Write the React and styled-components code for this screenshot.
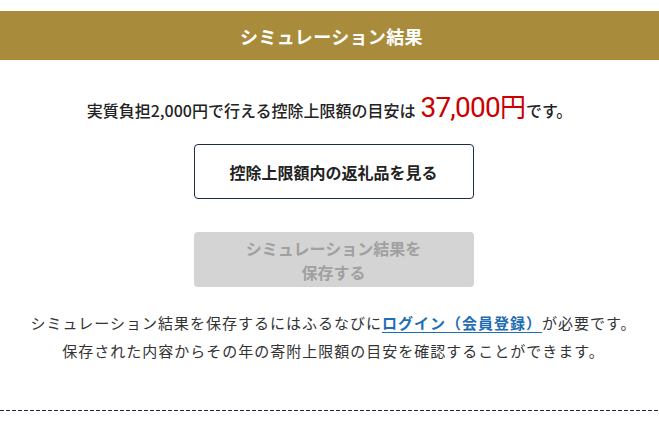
import React from "react";
import styled, { createGlobalStyle } from "styled-components";

const Global = createGlobalStyle`
  html, body { margin: 0; padding: 0; background: #fff; }
  body { font-family: "Noto Sans CJK JP", "Noto Sans", sans-serif; color: #222; }
`;

const Page = styled.div`
  padding-top: 11px;
  display: flex;
  flex-direction: column;
  align-items: stretch;
`;

const Header = styled.h2`
  margin: 0;
  height: 49px;
  background: #a98b3c;
  color: #fff;
  font-size: 18px;
  font-weight: 700;
  letter-spacing: 0.02em;
  display: flex;
  align-items: center;
  justify-content: center;
  padding-left: 4px;
`;

const Body = styled.div`
  display: flex;
  flex-direction: column;
  align-items: center;
  padding-top: 28px;
  padding-left: 8px;
`;

const Summary = styled.p`
  margin: 0 8px 0 0;
  font-size: 16px;
  font-weight: 500;
  color: #222;
  line-height: 36px;
  height: 36px;
  display: flex;
  align-items: baseline;
`;

const Amount = styled.span`
  font-family: "Roboto", sans-serif;
  font-size: 28px;
  font-weight: 400;
  color: #cc0000;
  margin: 0 0 0 5px;
  letter-spacing: -0.8px;
`;

const Yen = styled.span`
  font-family: "Noto Sans CJK JP", sans-serif;
  font-size: 26px;
  letter-spacing: 0;
`;

const ButtonStack = styled.div`
  display: flex;
  flex-direction: column;
  gap: 33px;
  margin-top: 20px;
`;

const Button = styled.button`
  width: 280px;
  height: 55px;
  box-sizing: border-box;
  border-radius: 4px;
  font-family: "Noto Sans CJK JP", sans-serif;
  font-size: 16px;
  font-weight: 700;
  line-height: 24px;
  padding: 0;
  display: flex;
  align-items: center;
  justify-content: center;
  text-align: center;
  border: ${(p) => (p.$disabled ? "none" : "1px solid #1e2a4a")};
  background: ${(p) => (p.$disabled ? "#d4d4d4" : "#fff")};
  color: ${(p) => (p.$disabled ? "#a0a0a0" : "#222")};
  cursor: ${(p) => (p.$disabled ? "default" : "pointer")};
`;

const Note = styled.p`
  margin: 22px 0 0;
  font-size: 15px;
  letter-spacing: 1px;
  line-height: 28px;
  color: #333;
  text-align: center;
`;

const Link = styled.a`
  color: #1f6db3;
  font-weight: 700;
  text-decoration: underline;
  text-underline-offset: 3px;
  text-decoration-thickness: 1px;
`;

const Divider = styled.hr`
  margin: 45px 0 0;
  border: none;
  height: 1px;
  background: repeating-linear-gradient(
    to right,
    #1e2a4a 0 4px,
    transparent 4px 6px
  );
`;

export default function App() {
  return (
    <>
      <Global />
      <Page>
        <Header>シミュレーション結果</Header>
        <Body>
          <Summary>
            実質負担2,000円で行える控除上限額の目安は
            <Amount>
              37,000<Yen>円</Yen>
            </Amount>
            です。
          </Summary>
          <ButtonStack>
            <Button>控除上限額内の返礼品を見る</Button>
            <Button $disabled disabled>
              シミュレーション結果を
              <br />
              保存する
            </Button>
          </ButtonStack>
          <Note>
            シミュレーション結果を保存するにはふるなびに
            <Link href="#">ログイン（会員登録）</Link>が必要です。
            <br />
            保存された内容からその年の寄附上限額の目安を確認することができます。
          </Note>
        </Body>
        <Divider />
      </Page>
    </>
  );
}
